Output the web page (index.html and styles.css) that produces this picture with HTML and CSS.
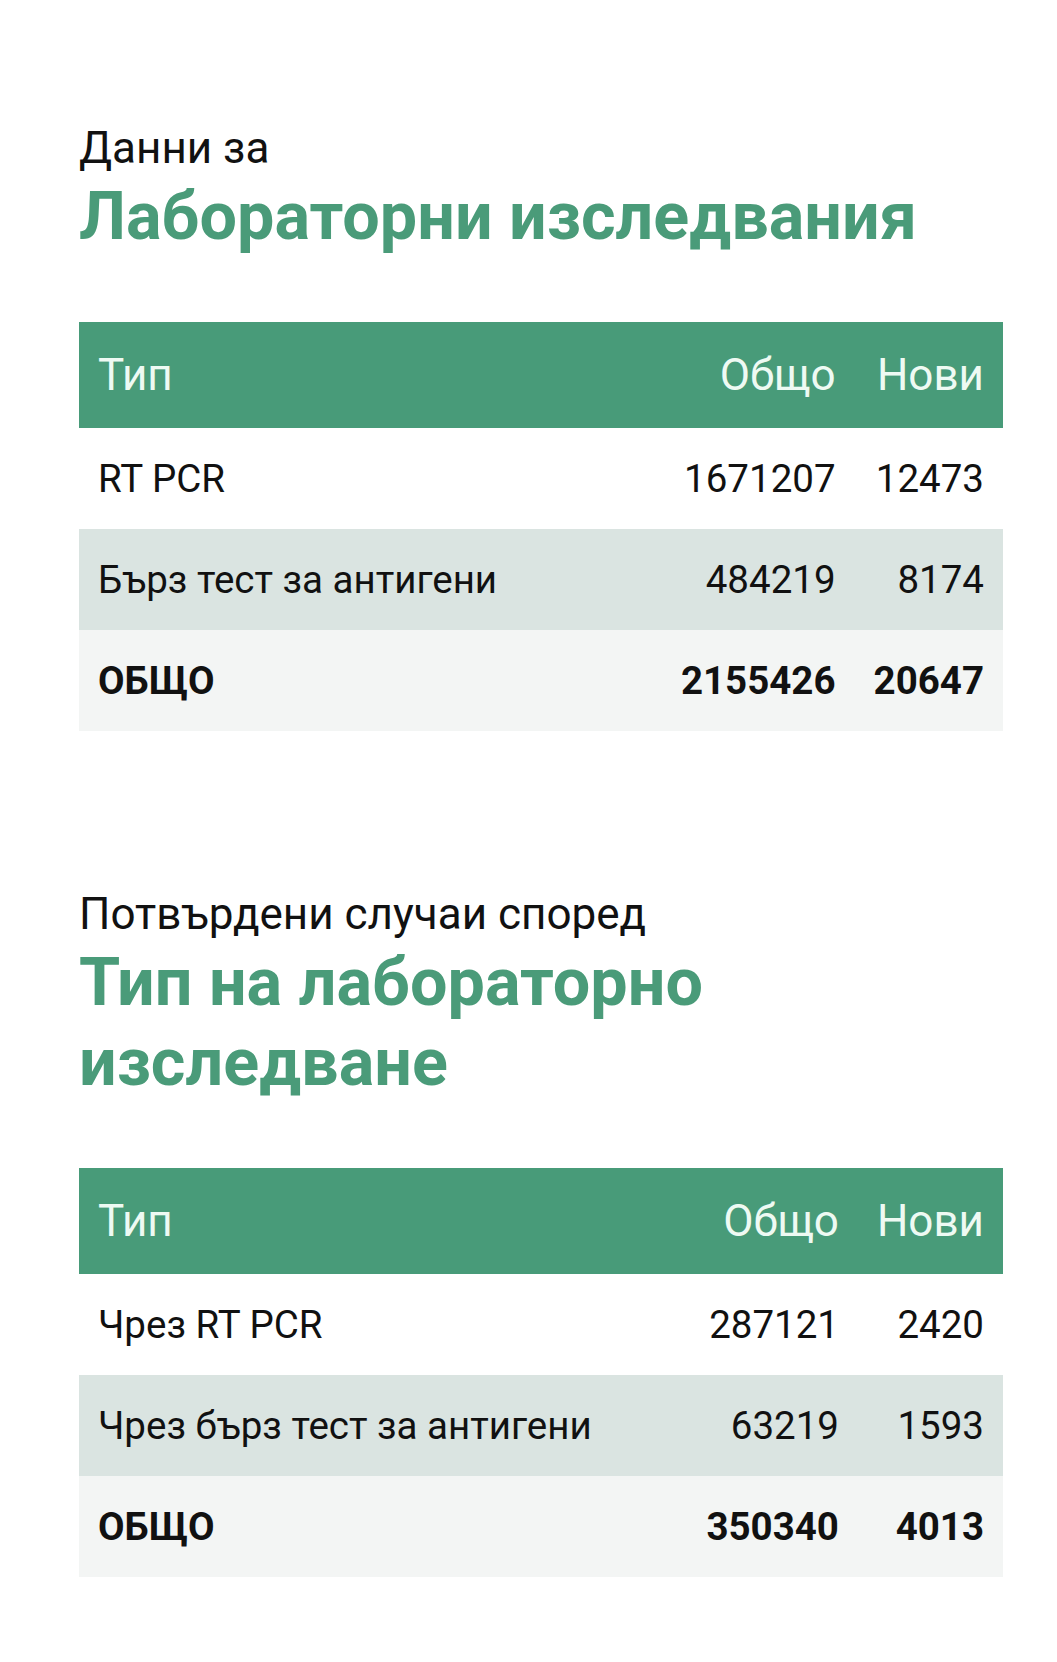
FILE: index.html
```html
<!DOCTYPE html>
<html lang="bg">
<head>
<meta charset="utf-8">
<title>Лабораторни изследвания</title>
<link rel="stylesheet" href="styles.css">
</head>
<body>
<main class="page">
  <section class="section section-first">
    <p class="eyebrow">Данни за</p>
    <h2 class="title">Лабораторни изследвания</h2>
    <table class="stats">
      <thead>
        <tr><th class="c-type">Тип</th><th class="c-num">Общо</th><th class="c-num">Нови</th></tr>
      </thead>
      <tbody>
        <tr class="r-plain"><td class="c-type">RT PCR</td><td class="c-num">1671207</td><td class="c-num">12473</td></tr>
        <tr class="r-shade"><td class="c-type">Бърз тест за антигени</td><td class="c-num">484219</td><td class="c-num">8174</td></tr>
        <tr class="r-total"><td class="c-type">ОБЩО</td><td class="c-num">2155426</td><td class="c-num">20647</td></tr>
      </tbody>
    </table>
  </section>
  <section class="section section-second">
    <p class="eyebrow">Потвърдени случаи според</p>
    <h2 class="title">Тип на лабораторно изследване</h2>
    <table class="stats">
      <thead>
        <tr><th class="c-type">Тип</th><th class="c-num">Общо</th><th class="c-num">Нови</th></tr>
      </thead>
      <tbody>
        <tr class="r-plain"><td class="c-type">Чрез RT PCR</td><td class="c-num">287121</td><td class="c-num">2420</td></tr>
        <tr class="r-shade"><td class="c-type">Чрез бърз тест за антигени</td><td class="c-num">63219</td><td class="c-num">1593</td></tr>
        <tr class="r-total"><td class="c-type">ОБЩО</td><td class="c-num">350340</td><td class="c-num">4013</td></tr>
      </tbody>
    </table>
  </section>
</main>
</body>
</html>
```

FILE: styles.css
```css
* { box-sizing: border-box; }

html, body {
  margin: 0;
  padding: 0;
  background: #ffffff;
}

body {
  font-family: Roboto, "Noto Sans", "Liberation Sans", sans-serif;
  color: #111111;
}

.page {
  width: 924px;
  margin-left: 79px;
  padding-top: 122px;
  padding-bottom: 85px;
}

.section-second {
  margin-top: 157px;
}

.eyebrow {
  margin: 0;
  font-size: 44px;
  line-height: 52px;
  font-weight: 400;
  color: #111111;
}

.title {
  margin: 2px 0 0;
  font-size: 66.5px;
  line-height: 80px;
  font-weight: 700;
  color: #4a9b79;
}

.stats {
  margin-top: 66px;
  width: 100%;
  border-collapse: collapse;
  border-spacing: 0;
}

.stats th,
.stats td {
  padding: 0 19px;
  white-space: nowrap;
  vertical-align: middle;
}

.stats thead tr {
  background: #489b79;
  height: 106px;
}

.stats th {
  font-size: 44px;
  font-weight: 400;
  color: #eefaf3;
}

.stats tbody tr {
  height: 101px;
}

.stats td {
  font-size: 38.5px;
  font-weight: 400;
  color: #111111;
}

.c-type {
  text-align: left;
  width: 100%;
}

.c-num {
  text-align: right;
}

.r-plain { background: #ffffff; }
.r-shade { background: #dae4e1; }
.r-total { background: #f3f5f4; }
.r-total td { font-weight: 700; }
```
